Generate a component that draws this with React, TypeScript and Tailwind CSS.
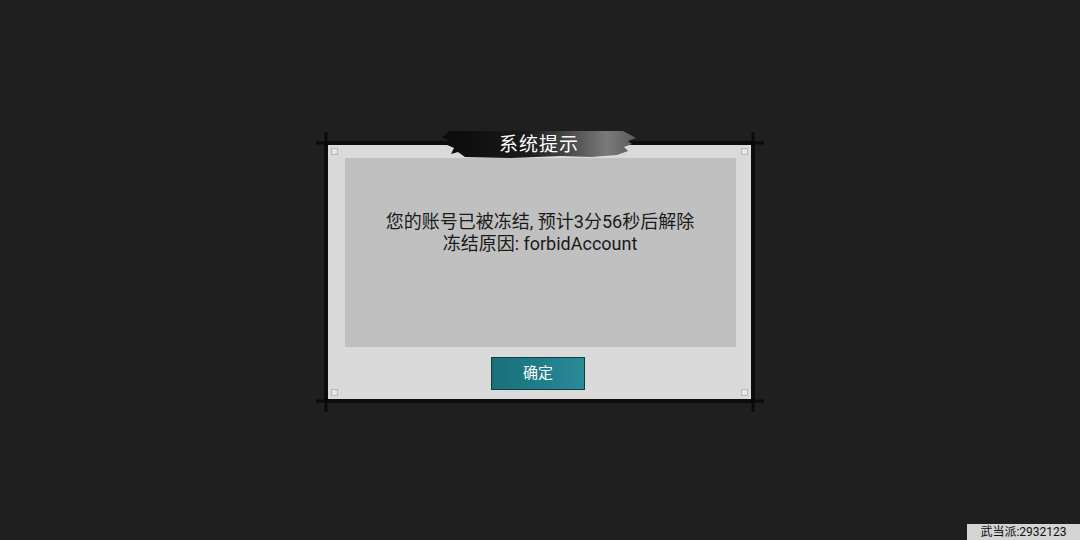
import React from 'react';

const FONT = { fontFamily: 'Roboto, "Noto Sans CJK SC", sans-serif' };

// Ink strokes overshooting the frame corners, plus the small hollow squares inside them.
// Drawn in a box that extends 10px past the frame's outer edge on every side.
const FrameDecor = () => {
  const W = 451;
  const H = 282;
  const ticks = [
    [2, 12, 16, 12], [12, 1, 12, 16],
    [W - 16, 12, W - 1, 12], [W - 12, 1, W - 12, 16],
    [2, H - 12, 16, H - 12], [12, H - 16, 12, H - 1],
    [W - 16, H - 12, W - 1, H - 12], [W - 12, H - 16, W - 12, H - 1],
  ];
  const marks = [
    [17, 17], [W - 24, 17], [17, H - 24], [W - 24, H - 24],
  ];
  return (
    <svg className="absolute -left-[14px] -top-[14px] pointer-events-none" width={W} height={H}>
      {ticks.map(([x1, y1, x2, y2], i) => (
        <line key={i} x1={x1} y1={y1} x2={x2} y2={y2} stroke="#0b0b0b" strokeWidth="3" />
      ))}
      {marks.map(([x, y], i) => (
        <rect key={i} x={x + 0.5} y={y + 0.5} width="6" height="6" fill="#e6e6e6" stroke="#b8b8b8" />
      ))}
    </svg>
  );
};

const TitleBanner = ({ title }: { title: string }) => (
  <div className="absolute left-1/2 -translate-x-1/2 -top-[16px] w-[196px] h-[30px] flex items-center justify-center">
    <svg className="absolute inset-0" width="196" height="30" viewBox="0 0 196 30">
      <defs>
        <linearGradient id="brush" x1="0" y1="0" x2="1" y2="0">
          <stop offset="0" stopColor="#0a0a0a" />
          <stop offset="0.45" stopColor="#1a1a1a" />
          <stop offset="0.85" stopColor="#7a7a7a" />
          <stop offset="1" stopColor="#5a5a5a" />
        </linearGradient>
      </defs>
      <path
        d="M1 8 L9 2 L182 2 L195 9 L187 12 L191 15 L183 18 L187 22 L176 26 L150 28 L120 27 L70 29 L24 28 L17 23 L10 25 L13 19 L4 15 L9 12 Z"
        fill="url(#brush)"
      />
    </svg>
    <span className="relative text-white text-[19px] leading-none tracking-[1px]">{title}</span>
  </div>
);

export default function App() {
  return (
    <div className="relative w-[1080px] h-[540px] bg-[#1f1f1f] overflow-hidden flex items-center justify-center" style={FONT}>
      <div className="relative w-[431px] h-[262px] mt-[4px] -translate-x-[1px] border-4 border-[#0d0d0d] bg-[#dadada] flex flex-col pl-[17px] pr-[15px] pt-[13px] pb-[9px]">
        <FrameDecor />
        <TitleBanner title="系统提示" />

        <div className="h-[190px] bg-[#c0c0c0] flex flex-col items-center pt-[53px] text-[#1a1a1a] text-[18px] leading-[22px]">
          <p>您的账号已被冻结, 预计3分56秒后解除</p>
          <p>冻结原因: forbidAccount</p>
        </div>

        <div className="flex justify-center pt-[10px] pr-[4px]">
          <button className="w-[94px] h-[33px] border border-[#0e3f47] text-white text-[15px] bg-gradient-to-r from-[#1b6f7b] via-[#1f7d89] to-[#2a8a95]">
            确定
          </button>
        </div>
      </div>

      <div className="absolute right-0 bottom-0 w-[113px] h-[16px] bg-[#d4d4d4] flex items-center justify-center text-[12px] leading-none text-[#111]">
        武当派:2932123
      </div>
    </div>
  );
}
